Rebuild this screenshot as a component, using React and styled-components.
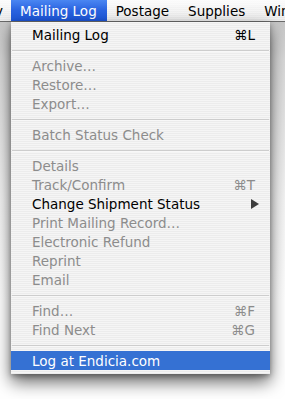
import React from 'react';
import styled, { createGlobalStyle } from 'styled-components';

const Global = createGlobalStyle`
  html, body {
    margin: 0;
    padding: 0;
    background: #ffffff;
  }
  body {
    font-family: "DejaVu Sans", "Liberation Sans", sans-serif;
    overflow: hidden;
  }
`;

const Screen = styled.div`
  position: relative;
  width: 285px;
  height: 399px;
  overflow: hidden;
  background: linear-gradient(#bdbdbd 0px, #d8d8d8 60px, #f4f4f4 200px, #ffffff 300px);
`;

const MenuBar = styled.div`
  display: flex;
  align-items: stretch;
  height: 21px;
  margin-left: -5px;
  border-bottom: 1px solid #6a6a6a;
  background: repeating-linear-gradient(
      to bottom,
      rgba(255, 255, 255, 0.35) 0px,
      rgba(255, 255, 255, 0.35) 1px,
      rgba(0, 0, 0, 0) 1px,
      rgba(0, 0, 0, 0) 2px
    ),
    linear-gradient(#fbfbfb, #e6e6e6);
`;

const MenuTitle = styled.div`
  display: flex;
  align-items: center;
  padding: ${(p) => (p.$cut ? '0 8px 0 0' : '0 10px 0 9px')};
  font-size: 13.5px;
  color: ${(p) => (p.$active ? '#ffffff' : '#000000')};
  background: ${(p) => (p.$active ? 'linear-gradient(#4a86f2, #2a63e0 50%, #1c55d6)' : 'transparent')};
  white-space: nowrap;
`;

const Panel = styled.div`
  position: absolute;
  left: 11px;
  top: 22px;
  width: 259px;
  padding: 3px 0 4px;
  display: flex;
  flex-direction: column;
  background: repeating-linear-gradient(
    to bottom,
    #f5f5f5 0px,
    #f5f5f5 1px,
    #ececec 1px,
    #ececec 2px
  );
  box-shadow: 0 8px 16px rgba(0, 0, 0, 0.6), 0 2px 5px rgba(0, 0, 0, 0.3);
`;

const Item = styled.div`
  display: flex;
  align-items: center;
  justify-content: space-between;
  height: 19px;
  padding: 0 15px 0 21px;
  font-size: 13.5px;
  color: ${(p) => (p.$selected ? '#ffffff' : p.$disabled ? '#8c8c8c' : '#000000')};
  background: ${(p) => (p.$selected ? '#3571d3' : 'transparent')};
  white-space: nowrap;
`;

const Shortcut = styled.span`
  font-size: 13.5px;
`;

const Arrow = styled.span`
  width: 0;
  height: 0;
  margin-right: -4px;
  border-top: 5px solid transparent;
  border-bottom: 5px solid transparent;
  border-left: 8px solid #3c3c3c;
`;

const Separator = styled.div`
  height: 12px;
  display: flex;
  align-items: center;
  padding: 0 1px;

  &::before {
    content: '';
    flex: 1;
    height: 1px;
    background: #cdcdcd;
    border-bottom: 1px solid #f8f8f8;
    margin-top: 1px;
  }
`;

const groups = [
  [{ label: 'Mailing Log', key: '⌘L' }],
  [
    { label: 'Archive…', disabled: true },
    { label: 'Restore…', disabled: true },
    { label: 'Export…', disabled: true },
  ],
  [{ label: 'Batch Status Check', disabled: true }],
  [
    { label: 'Details', disabled: true },
    { label: 'Track/Confirm', key: '⌘T', disabled: true },
    { label: 'Change Shipment Status', submenu: true },
    { label: 'Print Mailing Record…', disabled: true },
    { label: 'Electronic Refund', disabled: true },
    { label: 'Reprint', disabled: true },
    { label: 'Email', disabled: true },
  ],
  [
    { label: 'Find…', key: '⌘F', disabled: true },
    { label: 'Find Next', key: '⌘G', disabled: true },
  ],
  [{ label: 'Log at Endicia.com', selected: true }],
];

export default function App() {
  return (
    <Screen>
      <Global />
      <MenuBar>
        <MenuTitle $cut>y</MenuTitle>
        <MenuTitle $active>Mailing Log</MenuTitle>
        <MenuTitle>Postage</MenuTitle>
        <MenuTitle>Supplies</MenuTitle>
        <MenuTitle>Window</MenuTitle>
      </MenuBar>
      <Panel>
        {groups.map((group, gi) => (
          <React.Fragment key={gi}>
            {gi > 0 && <Separator />}
            {group.map((item) => (
              <Item key={item.label} $disabled={item.disabled} $selected={item.selected}>
                <span>{item.label}</span>
                {item.key && <Shortcut>{item.key}</Shortcut>}
                {item.submenu && <Arrow />}
              </Item>
            ))}
          </React.Fragment>
        ))}
      </Panel>
    </Screen>
  );
}
